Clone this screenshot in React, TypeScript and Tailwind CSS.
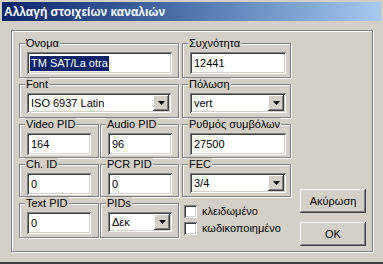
const sunken =
  "bg-white shadow-[inset_1px_1px_0_#808080,inset_-1px_-1px_0_#fff,inset_2px_2px_0_#404040,inset_-2px_-2px_0_#d4d0c8]";
const raised =
  "bg-[#d4d0c8] shadow-[inset_-1px_-1px_0_#404040,inset_1px_1px_0_#fff,inset_-2px_-2px_0_#808080,inset_2px_2px_0_#d4d0c8]";

const Group = ({ label, width, height, children }: { label: string; width: string; height: string; children: React.ReactNode }) => (
  <fieldset
    className={`${width} ${height} border border-[#808080] shadow-[inset_1px_1px_0_#fff,1px_1px_0_#fff] pl-[7px] pt-[2px]`}
  >
    <legend className="-ml-[2px] px-[1px] leading-[13px] bg-[#d4d0c8]">{label}</legend>
    {children}
  </fieldset>
);

const TextBox = ({ value, width, selected }: { value: string; width: string; selected?: boolean }) => (
  <div className={`${width} h-[22px] ${sunken} flex items-center pl-[3px]`}>
    {selected ? <span className="bg-[#0a246a] text-white px-[1px] leading-[15px]">{value}</span> : <span className="pl-[1px]">{value}</span>}
  </div>
);

const Combo = ({ value, width }: { value: string; width: string }) => (
  <div className={`${width} h-[20px] ${sunken} flex items-center p-[2px]`}>
    <span className="flex-1 pl-[2px]">{value}</span>
    <div className={`w-[16px] h-[16px] ${raised} flex items-center justify-center`}>
      <svg width="7" height="4" viewBox="0 0 7 4">
        <path d="M0 0h7L3.5 4z" fill="#000" />
      </svg>
    </div>
  </div>
);

const Check = ({ label }: { label: string }) => (
  <div className="flex items-center gap-[5px] h-[16px]">
    <div className={`w-[13px] h-[13px] ${sunken}`} />
    <span>{label}</span>
  </div>
);

const Button = ({ label }: { label: string }) => (
  <div className={`w-[66px] h-[24px] ${raised} flex items-center justify-center`}>{label}</div>
);

export default function App() {
  return (
    <div
      className="w-[383px] h-[264px] bg-[#d4d0c8] text-[11px] text-black pt-[2px] px-[2px] border-b-2 border-b-[#404040] overflow-hidden"
      style={{ fontFamily: '"Liberation Sans", Arial, sans-serif' }}
    >
      <div className="h-[19px] bg-linear-to-r from-[#0a246a] to-[#a6caf0] flex items-center pl-[2px]">
        <span className="text-white font-bold text-[12px]">Αλλαγή στοιχείων καναλιών</span>
      </div>
      <div className="ml-[9px] mt-[9px] w-[362px] h-[222px] border border-[#808080] shadow-[inset_1px_1px_0_#fff,1px_1px_0_#fff] flex pl-[7px] pt-[6px]">
        <div className="w-[272px] flex flex-col">
          <div className="flex gap-[3px]">
            <Group label="Όνομα" width="w-[160px]" height="h-[41px]">
              <TextBox value="TM SAT/La otra" width="w-[145px]" selected />
            </Group>
            <Group label="Συχνότητα" width="w-[109px]" height="h-[41px]">
              <TextBox value="12441" width="w-[96px]" />
            </Group>
          </div>
          <div className="flex gap-[3px]">
            <Group label="Font" width="w-[160px]" height="h-[40px]">
              <Combo value="ISO 6937 Latin" width="w-[144px]" />
            </Group>
            <Group label="Πόλωση" width="w-[109px]" height="h-[40px]">
              <Combo value="vert" width="w-[96px]" />
            </Group>
          </div>
          <div className="flex gap-[3px]">
            <div className="flex gap-[1px]">
              <Group label="Video PID" width="w-[80px]" height="h-[40px]">
                <TextBox value="164" width="w-[64px]" />
              </Group>
              <Group label="Audio PID" width="w-[79px]" height="h-[40px]">
                <TextBox value="96" width="w-[64px]" />
              </Group>
            </div>
            <Group label="Ρυθμός συμβόλων" width="w-[109px]" height="h-[40px]">
              <TextBox value="27500" width="w-[96px]" />
            </Group>
          </div>
          <div className="flex gap-[3px]">
            <div className="flex gap-[1px]">
              <Group label="Ch. ID" width="w-[80px]" height="h-[39px]">
                <TextBox value="0" width="w-[64px]" />
              </Group>
              <Group label="PCR PID" width="w-[79px]" height="h-[39px]">
                <TextBox value="0" width="w-[64px]" />
              </Group>
            </div>
            <Group label="FEC" width="w-[109px]" height="h-[39px]">
              <Combo value="3/4" width="w-[96px]" />
            </Group>
          </div>
          <div className="flex gap-[3px]">
            <div className="flex gap-[1px]">
              <Group label="Text PID" width="w-[80px]" height="h-[41px]">
                <TextBox value="0" width="w-[64px]" />
              </Group>
              <Group label="PIDs" width="w-[79px]" height="h-[41px]">
                <Combo value="Δεκ" width="w-[64px]" />
              </Group>
            </div>
            <div className="flex flex-col pl-[2px] pt-[6px] gap-[1px]">
              <Check label="κλειδωμένο" />
              <Check label="κωδικοποιημένο" />
            </div>
          </div>
        </div>
        <div className="flex flex-col gap-[9px] ml-[9px] mt-[152px]">
          <Button label="Ακύρωση" />
          <Button label="OK" />
        </div>
      </div>
    </div>
  );
}
